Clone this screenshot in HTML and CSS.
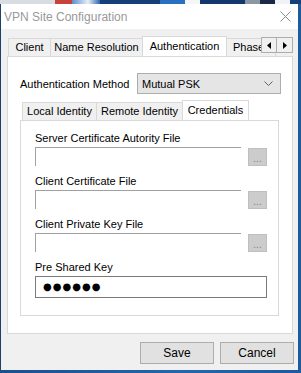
FILE: index.html
```html
<!DOCTYPE html>
<html lang="en">
<head>
    <meta charset="UTF-8">
    <title>VPN Site Configuration</title>
    <link rel="stylesheet" href="styles.css">
</head>
<body>

    <div class="desktop-strip"></div>

    <div class="window">
        <div class="titlebar">
            <span class="title">VPN Site Configuration</span>
            <svg class="close" width="11" height="11" viewBox="0 0 11 11">
                <path d="M0.5 0.5 L10.5 10.5 M10.5 0.5 L0.5 10.5" stroke="#8a8a8a" stroke-width="1" fill="none"/>
            </svg>
        </div>

        <div class="tabctl outer">
            <div class="tabs">
                <div class="tab tab-client">Client</div>
                <div class="tab tab-names">Name Resolution</div>
                <div class="tab tab-auth selected">Authentication</div>
                <div class="tab tab-phase">Phase 1</div>
            </div>
            <div class="tab-scroll">
                <span class="scroll-btn">
                    <svg width="4" height="7" viewBox="0 0 4 7"><path d="M4 0 L0 3.5 L4 7 Z" fill="#000"/></svg>
                </span>
                <span class="scroll-btn">
                    <svg width="4" height="7" viewBox="0 0 4 7"><path d="M0 0 L4 3.5 L0 7 Z" fill="#000"/></svg>
                </span>
            </div>

            <div class="panel outer-panel">
                <div class="method-row">
                    <span class="label">Authentication Method</span>
                    <div class="combo">
                        <span>Mutual PSK</span>
                        <svg width="9" height="5" viewBox="0 0 9 5"><path d="M0.5 0.5 L4.5 4.5 L8.5 0.5" stroke="#606060" stroke-width="1" fill="none"/></svg>
                    </div>
                </div>

                <div class="tabctl inner">
                    <div class="tabs">
                        <div class="tab tab-local">Local Identity</div>
                        <div class="tab tab-remote">Remote Identity</div>
                        <div class="tab tab-cred selected">Credentials</div>
                    </div>
                    <div class="panel inner-panel">
                        <div class="field">
                            <div class="label">Server Certificate Autority File</div>
                            <div class="file-row">
                                <div class="file-input"></div>
                                <button class="browse">...</button>
                            </div>
                        </div>
                        <div class="field">
                            <div class="label">Client Certificate File</div>
                            <div class="file-row">
                                <div class="file-input"></div>
                                <button class="browse">...</button>
                            </div>
                        </div>
                        <div class="field">
                            <div class="label">Client Private Key File</div>
                            <div class="file-row">
                                <div class="file-input"></div>
                                <button class="browse">...</button>
                            </div>
                        </div>
                        <div class="field">
                            <div class="label">Pre Shared Key</div>
                            <div class="password">●●●●●●</div>
                        </div>
                    </div>
                </div>
            </div>
        </div>

        <div class="buttons">
            <button class="btn">Save</button>
            <button class="btn">Cancel</button>
        </div>
    </div>

</body>
</html>
```

FILE: styles.css
```css
body {
    margin: 0;
    width: 301px;
    height: 373px;
    overflow: hidden;
    font-family: "Liberation Sans", Arial, sans-serif;
    font-size: 11px;
    color: #000;
    background: linear-gradient(90deg, #1b4f8c 0%, #2466ad 60%, #1d5a9e 100%);
}

.desktop-strip {
    height: 4px;
    background: linear-gradient(90deg,
        #d8dde4 0, #d8dde4 55px,
        #c8423a 55px, #c8423a 72px,
        #5a8fd0 72px, #e8eef5 88px, #2d66b0 100px,
        #163e78 100px, #163e78 160px,
        #2b6fc0 160px, #2b6fc0 185px,
        #f4f6f8 185px, #f4f6f8 200px,
        #14386e 200px, #14386e 245px,
        #8d96a3 245px, #8d96a3 260px,
        #1a2a44 260px, #1a2a44 275px,
        #f0f2f5 275px, #f0f2f5 290px,
        #163e78 290px);
}

.window {
    width: 297px;
    height: 366px;
    border-left: 1px solid #1d3f6a;
    background-color: #f0f0f0;
    display: flex;
    flex-direction: column;
}

.titlebar {
    height: 25px;
    background: #fff;
    display: flex;
    align-items: center;
    justify-content: space-between;
    padding: 0 7px 0 3px;
}

    .titlebar .title {
        font-size: 12px;
        color: #999;
    }

    .titlebar .close {
        display: block;
    }

/* tab controls */

.tabctl {
    position: relative;
}

    .tabctl.outer {
        margin: 7px 5px 0 6px;
    }

    .tabctl.inner {
        margin: 6px 2px 0 0;
    }

.tabs {
    display: flex;
    align-items: flex-end;
    height: 20px;
    padding-left: 1px;
    overflow: hidden;
    white-space: nowrap;
}

    .tabctl.inner .tabs {
        padding-left: 2px;
    }

.tab {
    box-sizing: border-box;
    height: 18px;
    line-height: 16px;
    text-align: center;
    border: 1px solid #d9d9d9;
    border-bottom: none;
    margin-left: -1px;
    background: #f0f0f0;
    flex-shrink: 0;
}

    .tab:first-child {
        margin-left: 0;
    }

    .tab.selected {
        height: 21px;
        line-height: 18px;
        margin-bottom: -1px;
        background: #fff;
        position: relative;
        z-index: 1;
    }

.tab-client { width: 43px; }
.tab-names { width: 93px; }
.tab-auth { width: 85px; }
.tab-phase { width: 50px; text-align: left; padding-left: 6px; }
.tab-local { width: 75px; }
.tab-remote { width: 87px; }
.tab-cred { width: 67px; }

.tab-scroll {
    position: absolute;
    top: 1px;
    left: 254px;
    display: flex;
}

.scroll-btn {
    box-sizing: border-box;
    width: 16px;
    height: 16px;
    border: 1px solid #adadad;
    background: #f0f0f0;
    display: flex;
    align-items: center;
    justify-content: center;
}

    .scroll-btn + .scroll-btn {
        margin-left: 0;
        border-left: none;
        width: 16px;
    }

.panel {
    box-sizing: border-box;
    background: #fff;
    border: 1px solid #d9d9d9;
}

.outer-panel {
    height: 278px;
    padding: 16px 11px 0 12px;
}

.inner-panel {
    height: 196px;
    padding: 10px 0 0 14px;
}

/* authentication method */

.method-row {
    display: flex;
    align-items: center;
    justify-content: space-between;
}

.combo {
    box-sizing: border-box;
    width: 144px;
    height: 21px;
    border: 1px solid #adadad;
    background: #e5e5e5;
    display: flex;
    align-items: center;
    justify-content: space-between;
    padding: 0 7px 0 4px;
}

/* credentials fields */

.field {
    margin-bottom: 8px;
}

    .field .label {
        height: 15px;
        line-height: 15px;
        margin-bottom: 1px;
    }

.file-row {
    display: flex;
    align-items: flex-start;
    gap: 7px;
}

.file-input {
    box-sizing: border-box;
    width: 206px;
    height: 19px;
    border-top: 1px solid #a0a0a0;
    border-left: 1px solid #a0a0a0;
}

.browse {
    box-sizing: border-box;
    width: 19px;
    height: 18px;
    margin-top: 1px;
    padding: 0;
    border: 1px solid #bfbfbf;
    background: #cccccc;
    color: #838383;
    font-family: "Liberation Sans", Arial, sans-serif;
    font-size: 10px;
    line-height: 20px;
}

.password {
    box-sizing: border-box;
    width: 232px;
    height: 22px;
    border: 1px solid #7a7a7a;
    padding-left: 7px;
    font-family: "DejaVu Sans", sans-serif;
    font-size: 10px;
    line-height: 20px;
    letter-spacing: 1px;
}

/* dialog buttons */

.buttons {
    display: flex;
    justify-content: flex-end;
    gap: 6px;
    margin: 8px 4px 0 0;
}

.btn {
    box-sizing: border-box;
    width: 74px;
    height: 22px;
    border: 1px solid #adadad;
    background: #e1e1e1;
    font-family: "Liberation Sans", Arial, sans-serif;
    font-size: 12px;
    color: #000;
    padding: 0;
}
```
